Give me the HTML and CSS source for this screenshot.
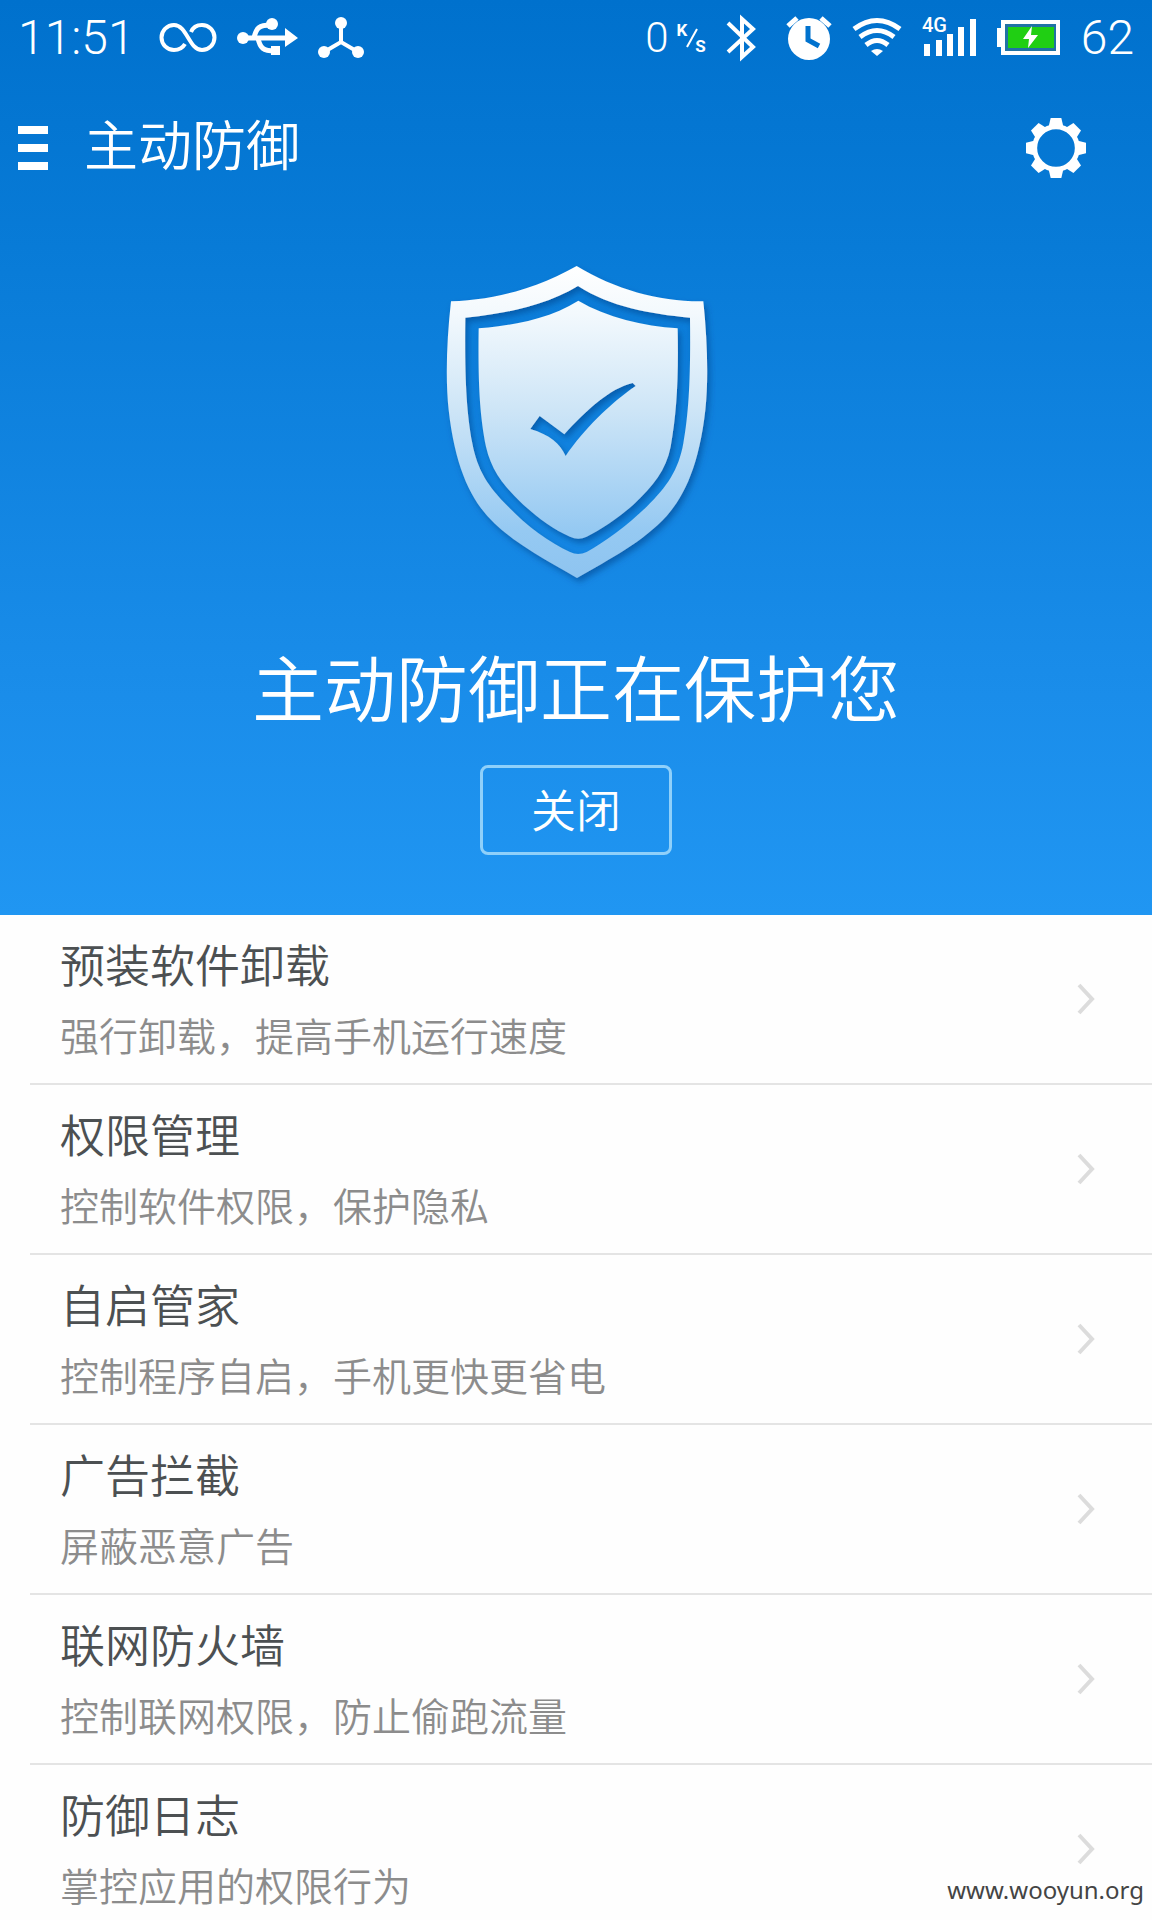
FILE: index.html
```html
<!DOCTYPE html>
<html lang="zh-CN">
<head>
<meta charset="utf-8">
<meta name="viewport" content="width=device-width, initial-scale=1">
<title>主动防御</title>
<link rel="stylesheet" href="styles.css">
</head>
<body>
<div class="screen">
  <header class="hero">
    <div class="status">
      <div class="status-group">
        <span class="clock">11:51</span>
        <svg class="icon" width="58" height="48" viewBox="0 0 58 48" aria-hidden="true">
          <path d="M26 30C23 35 19 36 15 36A12 12 0 0 1 15 11C28 11 30 36 43 36A12 12 0 0 0 43 11C38 11 34 13 32 18" fill="none" stroke="#fff" stroke-width="4"/>
        </svg>
        <svg class="icon" width="61" height="48" viewBox="0 0 61 48" aria-hidden="true">
          <g fill="none" stroke="#fff" stroke-width="5">
            <path d="M5 24H50"/>
            <path d="M17 24C19 14 22 11 34 11"/>
            <path d="M21 24C23 34 26 37 38 37"/>
          </g>
          <circle cx="6" cy="24" r="6" fill="#fff"/>
          <circle cx="35" cy="10" r="6" fill="#fff"/>
          <path d="M34 32h9v9h-9zM48 14L61 24L48 33z" fill="#fff"/>
        </svg>
        <svg class="icon" width="46" height="48" viewBox="0 0 46 48" aria-hidden="true">
          <path d="M23 9V29M6 38L23 28L40 38" fill="none" stroke="#fff" stroke-width="4"/>
          <g fill="#fff"><circle cx="23" cy="9" r="6"/><circle cx="6" cy="38" r="6"/><circle cx="40" cy="38" r="6"/></g>
        </svg>
      </div>
      <div class="status-group">
        <span class="rate"><span class="rate-value">0</span><span class="rate-unit"><span>K</span><svg class="slash" width="12" height="20" viewBox="0 0 12 20" aria-hidden="true"><path d="M11 1L1 19" stroke="#fff" stroke-width="2"/></svg><span class="unit-bottom">S</span></span></span>
        <svg class="icon" width="40" height="48" viewBox="0 0 40 48" aria-hidden="true">
          <path d="M2 9L27 33L16 43V5L27 15L2 38" fill="none" stroke="#fff" stroke-width="4"/>
        </svg>
        <svg class="icon" width="46" height="48" viewBox="0 0 46 48" aria-hidden="true">
          <circle cx="23" cy="25" r="21" fill="#fff"/>
          <path d="M2 12L11 4M35 4L44 12" stroke="#fff" stroke-width="5"/>
          <path d="M22 12V26L33 32" fill="none" stroke="#0072ce" stroke-width="5"/>
        </svg>
        <svg class="icon" width="50" height="48" viewBox="0 0 50 48" aria-hidden="true">
          <g fill="none" stroke="#fff" stroke-width="5">
            <path d="M2 15Q25 -2 48 15"/><path d="M8 23Q25 10 42 23"/><path d="M14 31Q25 22 36 31"/>
          </g>
          <path d="M19 37Q25 33 31 37L25 42z" fill="#fff"/>
        </svg>
        <svg class="icon" width="55" height="48" viewBox="0 0 55 48" aria-label="4G">
          <text x="0" y="18" class="network">4G</text>
          <path d="M2 30h6v12h-6zM14 26h6v16h-6zM25 20h6v22h-6zM36 13h6v29h-6zM48 5h6v37h-6z" fill="#fff"/>
        </svg>
        <svg class="icon" width="64" height="48" viewBox="0 0 64 48" aria-hidden="true">
          <path d="M6 8H61V39H6z" fill="#2072a4" stroke="#fff" stroke-width="4"/>
          <path d="M0 14h5v19H0z" fill="#fff"/>
          <path d="M11 13h46v21H11z" fill="#20cf13"/>
          <path d="M35 12L26 25H32L31 34L41 21H34z" fill="#fff"/>
        </svg>
        <span class="battery">62</span>
      </div>
    </div>

    <div class="appbar">
      <button class="icon-button" type="button" aria-label="菜单">
        <svg width="30" height="44" viewBox="0 0 30 44"><path d="M0 0h30v8H0zM0 18h30v8H0zM0 36h30v8H0z" fill="#fff"/></svg>
      </button>
      <h1 class="title">主动防御</h1>
      <button class="icon-button" type="button" aria-label="设置">
        <svg width="60" height="60" viewBox="-90 -90 180 180">
          <defs><path id="tooth" d="M-23 -60L-16 -90H16L23 -60z"/></defs>
          <circle r="64" fill="none" stroke="#fff" stroke-width="15"/>
          <g fill="#fff">
            <use href="#tooth"/><use href="#tooth" transform="rotate(45)"/><use href="#tooth" transform="rotate(90)"/><use href="#tooth" transform="rotate(135)"/>
            <use href="#tooth" transform="rotate(180)"/><use href="#tooth" transform="rotate(225)"/><use href="#tooth" transform="rotate(270)"/><use href="#tooth" transform="rotate(315)"/>
          </g>
        </svg>
      </button>
    </div>

    <svg class="shield" width="280" height="330" viewBox="48 60 840 990" aria-hidden="true">
      <defs>
        <linearGradient id="metal" gradientUnits="userSpaceOnUse" x1="0" y1="78" x2="0" y2="1014">
          <stop offset="0" stop-color="#fff"/>
          <stop offset="0.150" stop-color="#f3f9fd"/>
          <stop offset="0.450" stop-color="#cfe6f7"/>
          <stop offset="0.850" stop-color="#95c9f2"/>
          <stop offset="1" stop-color="#8ec4f0"/>
        </linearGradient>
        <filter id="shadow" x="-10%" y="-10%" width="120%" height="120%">
          <feDropShadow dx="8" dy="12" stdDeviation="9" flood-color="#003f86" flood-opacity="0.550"/>
        </filter>
      </defs>
      <g fill="url(#metal)" fill-rule="evenodd" filter="url(#shadow)">
        <path d="M470 78C590 150 720 186 850 184C862 300 866 420 856 510C838 670 796 765 740 828C670 905 570 957 471 1014C372 957 272 905 202 828C146 765 104 670 86 510C76 420 80 300 93 184C222 180 350 146 470 78zM474 138C570 200 690 222 810 233C812 400 808 510 790 610C776 690 740 742 680 800C620 858 550 908 500 936Q474 948 450 936C390 908 320 858 265 800C205 742 172 690 157 610C138 510 134 400 136 233C256 222 378 196 474 138z"/>
        <path d="M475 182C560 232 670 258 773 265C776 420 770 520 752 620C738 690 700 738 640 794C590 838 540 870 500 890Q475 902 450 890C400 868 360 838 310 794C250 738 214 690 198 620C178 520 174 420 176 265C280 256 390 236 475 182zM331 567L359 528L433 583C500 510 570 445 638 429L647 438C570 490 490 570 437 648C420 610 390 585 331 567z"/>
      </g>
    </svg>

    <p class="headline">主动防御正在保护您</p>
    <button class="toggle" type="button">关闭</button>
  </header>

  <nav class="list">
    <a class="row" href="#uninstall"><span class="row-text"><span class="row-title">预装软件卸载</span><span class="row-note">强行卸载，提高手机运行速度</span></span><svg class="chevron" width="18" height="32" viewBox="0 0 18 32"><path d="M2 2L15 16L2 30"/></svg></a>
    <a class="row" href="#permissions"><span class="row-text"><span class="row-title">权限管理</span><span class="row-note">控制软件权限，保护隐私</span></span><svg class="chevron" width="18" height="32" viewBox="0 0 18 32"><path d="M2 2L15 16L2 30"/></svg></a>
    <a class="row" href="#autostart"><span class="row-text"><span class="row-title">自启管家</span><span class="row-note">控制程序自启，手机更快更省电</span></span><svg class="chevron" width="18" height="32" viewBox="0 0 18 32"><path d="M2 2L15 16L2 30"/></svg></a>
    <a class="row" href="#ads"><span class="row-text"><span class="row-title">广告拦截</span><span class="row-note">屏蔽恶意广告</span></span><svg class="chevron" width="18" height="32" viewBox="0 0 18 32"><path d="M2 2L15 16L2 30"/></svg></a>
    <a class="row" href="#firewall"><span class="row-text"><span class="row-title">联网防火墙</span><span class="row-note">控制联网权限，防止偷跑流量</span></span><svg class="chevron" width="18" height="32" viewBox="0 0 18 32"><path d="M2 2L15 16L2 30"/></svg></a>
    <a class="row" href="#log"><span class="row-text"><span class="row-title">防御日志</span><span class="row-note">掌控应用的权限行为</span></span><svg class="chevron" width="18" height="32" viewBox="0 0 18 32"><path d="M2 2L15 16L2 30"/></svg></a>
  </nav>
  <span class="watermark">www.wooyun.org</span>
</div>
</body>
</html>
```

FILE: styles.css
```css
* { box-sizing: border-box; }

body {
  margin: 0;
  background: #fefefe;
  font-family: Roboto, "Noto Sans CJK SC", sans-serif;
  font-weight: 350;
}

.screen {
  position: relative;
  display: flex;
  flex-direction: column;
  height: 100vh;
}

.hero {
  flex: none;
  display: flex;
  flex-direction: column;
  align-items: center;
  padding-bottom: 60px;
  background: linear-gradient(#0071cd, #087bd7 27%, #1a8dea 76%, #2096f2);
  color: #fff;
}

.status {
  align-self: stretch;
  display: flex;
  justify-content: space-between;
  height: 76px;
  padding: 0 18px;
}

.status-group {
  display: flex;
  align-items: center;
  gap: 20px;
}

.icon { flex: none; }

.clock,
.battery {
  font-size: 48px;
  font-weight: 300;
  line-height: 60px;
}

.clock { margin-right: 4px; }

.rate {
  display: flex;
  align-items: center;
  gap: 8px;
}

.rate-value {
  font-size: 42px;
  font-weight: 300;
  line-height: 60px;
}

.rate-unit {
  display: flex;
  align-items: center;
  height: 32px;
  font-size: 17px;
  font-weight: 700;
  line-height: 16px;
}

.rate-unit span { align-self: flex-start; }
.rate-unit .unit-bottom { align-self: flex-end; }
.slash { margin: 0 -3px 0 -1px; }

.network {
  fill: #fff;
  font-size: 20px;
  font-weight: 500;
}

.appbar {
  align-self: stretch;
  display: flex;
  align-items: center;
  height: 144px;
  padding: 0 66px 0 18px;
}

.icon-button {
  display: flex;
  padding: 0;
  border: 0;
  background: none;
}

.title {
  flex: 1;
  margin: 0 0 0 36px;
  font-size: 54px;
  font-weight: 350;
  line-height: 80px;
}

.shield { margin-top: 40px; }

.headline {
  margin: 52px 0 23px;
  font-size: 72px;
  line-height: 100px;
}

.toggle {
  width: 192px;
  height: 90px;
  padding: 0 0 4px;
  border: 3px solid #8fd0fa;
  border-radius: 8px;
  background: none;
  color: #fff;
  font: inherit;
  font-size: 45px;
}

.list {
  flex: 1;
  min-height: 0;
  margin-left: 30px;
  overflow-y: auto;
  scrollbar-width: none;
}

.row {
  display: flex;
  align-items: center;
  justify-content: space-between;
  height: 170px;
  padding: 0 57px 0 30px;
  border-bottom: 2px solid #e4e4e4;
  color: #4c5052;
  text-decoration: none;
}

.row-text {
  display: flex;
  flex-direction: column;
  gap: 10px;
  padding-top: 8px;
}

.row-title {
  font-size: 45px;
  line-height: 60px;
}

.row-note {
  color: #8c8c8c;
  font-size: 39px;
  line-height: 60px;
}

.chevron {
  fill: none;
  stroke: #dcdcdc;
  stroke-width: 4px;
}

.watermark {
  position: absolute;
  right: 8px;
  bottom: 13px;
  color: #444;
  font-family: "Noto Sans", sans-serif;
  font-size: 24px;
  font-weight: 400;
  line-height: 34px;
}
```
